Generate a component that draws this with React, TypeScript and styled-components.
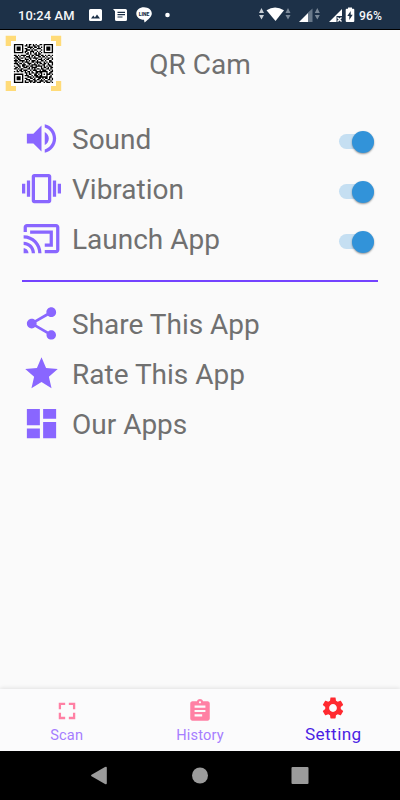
import React from "react";
import styled, { createGlobalStyle } from "styled-components";

const GlobalStyle = createGlobalStyle`
  * { box-sizing: border-box; }
  body { margin: 0; background: #fafafa; font-family: Roboto, sans-serif; }
`;

const Screen = styled.div`
  width: 400px;
  height: 800px;
  display: flex;
  flex-direction: column;
  background: #fafafa;
  overflow: hidden;
`;

const StatusBar = styled.header`
  height: 30px;
  padding: 2px 17px 0 18px;
  display: flex;
  align-items: center;
  flex: none;
  background: #1d3148;
  border-bottom: 1px solid #000;
  color: #f4f6f8;
`;

const StatusText = styled.span<{ $size: number; $width: number }>`
  width: ${(p) => p.$width}px;
  font-size: ${(p) => p.$size}px;
  font-weight: 500;
  white-space: nowrap;
  letter-spacing: 0.1px;
`;

const StatusIcons = styled.svg`
  display: block;
  flex: none;
  margin-top: -1px;
`;

const Header = styled.div`
  height: 84px;
  flex: none;
  display: grid;
  grid-template-columns: 100px 200px 100px;
  align-items: start;
`;

const Logo = styled.svg`
  margin: 5px 0 0 5px;
`;

const Title = styled.h1`
  margin: 17px 0 0;
  font-size: 28px;
  line-height: 36px;
  font-weight: 400;
  text-align: center;
  color: #707070;
`;

const List = styled.ul`
  list-style: none;
  margin: 0;
  padding: 0 22px;
`;

const Row = styled.li`
  height: 50px;
  display: flex;
  align-items: center;
`;

const RowIcon = styled.svg`
  width: 39px;
  height: 39px;
  margin: -1px 11px 0 0;
  fill: #8966ff;
`;

const RowLabel = styled.span`
  flex: 1;
  padding-top: 2px;
  font-size: 28px;
  font-weight: 400;
  line-height: 36px;
  color: #707070;
  white-space: nowrap;
`;

const Track = styled.span`
  width: 35px;
  height: 15px;
  margin: 5px 4px 0 0;
  border-radius: 8px;
  background: #c5dff2;
  display: flex;
  align-items: center;
  justify-content: flex-end;
`;

const Knob = styled.span`
  width: 22px;
  height: 22px;
  flex: none;
  border-radius: 50%;
  background: #3293d9;
  box-shadow: 0 1px 2px rgba(0, 0, 0, 0.4);
`;

const Divider = styled.hr`
  flex: none;
  width: 356px;
  height: 2px;
  margin: 16px 22px 17px;
  border: 0;
  background: #7443ff;
`;

const Tabs = styled.nav`
  height: 62px;
  margin-top: auto;
  flex: none;
  display: grid;
  grid-template-columns: repeat(3, 1fr);
  background: #fbfbfc;
  box-shadow: 0 -1px 4px rgba(0, 0, 0, 0.1);
`;

const Tab = styled.div<{ $active?: boolean }>`
  display: flex;
  flex-direction: column;
  align-items: center;
  padding-top: ${(p) => (p.$active ? 6 : 9)}px;
  color: ${(p) => (p.$active ? "#4a1fe4" : "#a67dff")};
  font-size: ${(p) => (p.$active ? 17.2 : 14.6)}px;
  font-weight: 400;
  line-height: ${(p) => (p.$active ? 22 : 21)}px;
  letter-spacing: ${(p) => (p.$active ? 0.4 : 0.15)}px;
`;

const TabIcon = styled.svg<{ $active?: boolean; $size: number }>`
  width: ${(p) => p.$size}px;
  height: ${(p) => p.$size}px;
  margin: ${(p) => (26 - p.$size) / 2}px 0 ${(p) => (26 - p.$size) / 2 + (p.$active ? 2 : 1)}px;
  fill: ${(p) => (p.$active ? "#ff2a30" : "#ff80a4")};
`;

const SystemNav = styled.footer`
  height: 49px;
  flex: none;
  background: #000;
`;

const QR = [
  "11111110010110101001101111111",
  "10000010110100110110001000001",
  "10111010001111011010101011101",
  "10111010110010100111001011101",
  "10111010011101011000101011101",
  "10000010110011100101001000001",
  "11111110101010101010101111111",
  "00000000011010011011000000000",
  "11010111100101101110110101101",
  "01101001011101010011011010010",
  "10110110100110111100100101101",
  "01011000111010001011101011001",
  "11101111010101110100110100110",
  "01010010111001101111001010111",
  "11101101001110010101101101001",
  "00110011100101111010011001101",
  "10011011011011001111101010110",
  "01101001110101111000101101011",
  "11010110001101010110110011010",
  "00101101110010111001011100101",
  "10110110101101001111111110011",
  "00000000110101101101100010110",
  "11111110010110011010101011101",
  "10000010111001011101100010010",
  "10111010001110101111111110110",
  "10111010110011010011010110101",
  "10111010011100110110101001101",
  "10000010100111011001110110010",
  "11111110111010110111001011101",
];

const qrPath = QR.map((line, y) =>
  [...line].map((c, x) => (c === "1" ? `M${x} ${y}h1v1h-1z` : "")).join("")
).join("");

const paths = {
  sound:
    "M3 9v6h4l5 5V4L7 9H3zm13.5 3c0-1.77-1.02-3.29-2.5-4.03v8.05c1.48-.73 2.5-2.25 2.5-4.02zM14 3.23v2.06c2.89.86 5 3.54 5 6.71s-2.11 5.85-5 6.71v2.06c4.01-.91 7-4.49 7-8.77s-2.99-7.86-7-8.77z",
  vibration:
    "M0 15h2V9H0v6zm3 2h2V7H3v10zm19-8v6h2V9h-2zm-3 8h2V7h-2v10zM16.5 3h-9C6.67 3 6 3.67 6 4.5v15c0 .83.67 1.5 1.5 1.5h9c.83 0 1.5-.67 1.5-1.5v-15c0-.83-.67-1.5-1.5-1.5zM16 19H8V5h8v14z",
  cast:
    "M1 18v3h3c0-1.66-1.34-3-3-3zm0-4v2c2.76 0 5 2.24 5 5h2c0-3.87-3.13-7-7-7zM1 10v2c4.97 0 9 4.03 9 9h2c0-6.08-4.93-11-11-11zm20-7H3c-1.1 0-2 .9-2 2v3h2V5h18v14h-7v2h7c1.1 0 2-.9 2-2V5c0-1.1-.9-2-2-2zM5 7v2h12v6h-3v2h5V7z",
  share:
    "M18 16.08c-.76 0-1.44.3-1.96.77L8.91 12.7c.05-.23.09-.46.09-.7s-.04-.47-.09-.7l7.05-4.11c.54.5 1.25.81 2.04.81 1.66 0 3-1.34 3-3s-1.34-3-3-3-3 1.34-3 3c0 .24.04.47.09.7L8.04 9.81C7.5 9.31 6.79 9 6 9c-1.66 0-3 1.34-3 3s1.34 3 3 3c.79 0 1.5-.31 2.04-.81l7.12 4.16c-.05.21-.08.43-.08.65 0 1.61 1.31 2.92 2.92 2.92s2.92-1.31 2.92-2.92-1.31-2.92-2.92-2.92z",
  star: "M12 17.27L18.18 21l-1.64-7.03L22 9.24l-7.19-.61L12 2 9.19 8.63 2 9.24l5.46 4.73L5.82 21z",
  dashboard: "M3 13h8V3H3v10zm0 8h8v-6H3v6zm10 0h8V11h-8v10zm0-18v6h8V3h-8z",
  scan: "M5 14H3v7h7v-2.600H5.500V14zM3 10h2.500V5.500H10V3H3v7zm15.500 8.400H14V21h7v-7h-2.500v4.400zM14 3v2.500h4.500V10H21V3h-7z",
  history:
    "M19 3h-4.18C14.4 1.84 13.3 1 12 1c-1.3 0-2.4.84-2.82 2H5c-1.1 0-2 .9-2 2v14c0 1.1.9 2 2 2h14c1.1 0 2-.9 2-2V5c0-1.1-.9-2-2-2zm-7 0c.55 0 1 .45 1 1s-.45 1-1 1-1-.45-1-1 .45-1 1-1zm2 14H7v-2h7v2zm3-4H7v-2h10v2zm0-4H7V7h10v2z",
  setting:
    "M19.14 12.94c.04-.3.06-.61.06-.94 0-.32-.02-.64-.07-.94l2.03-1.58c.18-.14.23-.41.12-.61l-1.92-3.32c-.12-.22-.37-.29-.59-.22l-2.39.96c-.5-.38-1.03-.7-1.62-.94l-.36-2.54c-.04-.24-.24-.41-.48-.41h-3.84c-.24 0-.43.17-.47.41l-.36 2.54c-.59.24-1.13.57-1.62.94l-2.39-.96c-.22-.08-.47 0-.59.22L2.74 8.87c-.12.21-.08.47.12.61l2.03 1.58c-.05.3-.09.63-.09.94s.02.64.07.94l-2.03 1.58c-.18.14-.23.41-.12.61l1.92 3.32c.12.22.37.29.59.22l2.39-.96c.5.38 1.03.7 1.62.94l.36 2.54c.05.24.24.41.48.41h3.84c.24 0 .44-.17.47-.41l.36-2.54c.59-.24 1.13-.56 1.62-.94l2.39.96c.22.08.47 0 .59-.22l1.92-3.32c.12-.22.07-.47-.12-.61l-2.01-1.58zM12 15.6c-1.98 0-3.6-1.62-3.6-3.6s1.62-3.6 3.6-3.6 3.6 1.62 3.6 3.6-1.62 3.6-3.6 3.6z",
};

type IconName = keyof typeof paths;

function Item({ icon, label, toggle }: { icon: IconName; label: string; toggle?: boolean }) {
  return (
    <Row>
      <RowIcon viewBox="0 0 24 24"><path d={paths[icon]} /></RowIcon>
      <RowLabel>{label}</RowLabel>
      {toggle && <Track role="switch" aria-checked="true"><Knob /></Track>}
    </Row>
  );
}

function TabItem({ icon, label, active, size = 26 }: { icon: IconName; label: string; active?: boolean; size?: number }) {
  return (
    <Tab $active={active}>
      <TabIcon $active={active} $size={size} viewBox="0 0 24 24"><path d={paths[icon]} /></TabIcon>
      {label}
    </Tab>
  );
}

export default function App() {
  return (
    <Screen>
      <GlobalStyle />
      <StatusBar>
        <StatusText $size={12.9} $width={68}>10:24 AM</StatusText>
        <StatusIcons width="90" height="20" viewBox="86 5 90 20" fill="#fff">
          <path fillRule="evenodd" d="M90.500 9h10q1.500 0 1.500 1.500v9q0 1.500-1.500 1.500h-10q-1.500 0-1.500-1.500v-9q0-1.500 1.500-1.500zM91 18.600h9l-3-4-2.100 2.900-1.600-1.900z" />
          <path fillRule="evenodd" d="M113 9h12.500q1.500 0 1.500 1.500v9q0 1.500-1.500 1.500h-9q-1.500 0-1.500-1.500v-8.300zM117.500 11.700v1.200h7.500v-1.200zm0 2.300v1.200h7.500v-1.200zm0 2.400v1.200h5v-1.200z" />
          <path d="M144 7.300c4.400 0 7.800 2.800 7.800 6.200 0 3.200-3.500 6-7.300 9l-.5-2.700c-4.400 0-7.700-2.800-7.700-6.300s3.300-6.200 7.700-6.200z" />
          <text x="144.100" y="15.500" textAnchor="middle" fontFamily="Roboto" fontSize="5" fontWeight="900" fill="#1d3148">LINE</text>
          <circle cx="167.500" cy="15" r="2.300" />
        </StatusIcons>
        <StatusIcons width="183" height="20" viewBox="176 5 183 20" fill="#fff">
          <path fill="#c9d0d6" d="M259 13l2.500-5 2.500 5zM259 15h5l-2.500 4.500z" />
          <path d="M266.500 10.300q8.500-5.500 17.500 0L275.500 21z" />
          <path fill="#7b8998" d="M285.500 13l2.500-5 2.500 5zM285.500 15h5l-2.500 4.500z" />
          <path fill="#687889" d="M308 12.500l4.500-4V22H308z" />
          <path d="M299 22l9-9v9z" />
          <path fill="#7b8998" d="M314.800 13l2.500-5 2.500 5zM314.800 15h5l-2.500 4.500z" />
          <path d="M329 22l13-13v7h-5.500v6z" />
          <path d="M337.500 17.500l4 4m0-4l-4 4" stroke="#fff" strokeWidth="1.300" />
          <path fillRule="evenodd" d="M348 7.500h4v1.300h1.300q1 0 1 1v11.200q0 1-1 1h-6.600q-1 0-1-1V9.800q0-1 1-1h1.300zM350.700 11l-3.400 5h2v4l3.400-5.300h-2z" />
        </StatusIcons>
        <StatusText $size={12.2} $width={24}>96%</StatusText>
      </StatusBar>
      <Header>
        <Logo width="58" height="58" viewBox="5 35 58 58">
          <path fill="#ffdb78" d="M5.700 35.700H16v5.300h-5v5H5.700zM51 35.700h10.200V46H56v-5h-5zM5.700 81H11v5h5v5H5.700zM56 81h5.200v10H51v-5h5z" />
          <rect x="11" y="41" width="45" height="45" fill="#fff" />
          <path d={qrPath} transform="translate(13.900 43.900) scale(1.350)" shapeRendering="geometricPrecision" />
        </Logo>
        <Title>QR Cam</Title>
      </Header>
      <List>
        <Item icon="sound" label="Sound" toggle />
        <Item icon="vibration" label="Vibration" toggle />
        <Item icon="cast" label="Launch App" toggle />
      </List>
      <Divider />
      <List>
        <Item icon="share" label="Share This App" />
        <Item icon="star" label="Rate This App" />
        <Item icon="dashboard" label="Our Apps" />
      </List>
      <Tabs>
        <TabItem icon="scan" label="Scan" size={22} />
        <TabItem icon="history" label="History" />
        <TabItem icon="setting" label="Setting" active />
      </Tabs>
      <SystemNav>
        <svg width="400" height="49" viewBox="0 751 400 49" fill="#9b9b9b">
          <path d="M91.500 774.800L105 767q1.800-1 1.800 1v15q0 2-1.800 1l-13.500-7.800q-1-.700 0-1.400z" />
          <circle cx="200" cy="775.500" r="8" />
          <rect x="291.500" y="767" width="17" height="17" rx="1" />
        </svg>
      </SystemNav>
    </Screen>
  );
}
